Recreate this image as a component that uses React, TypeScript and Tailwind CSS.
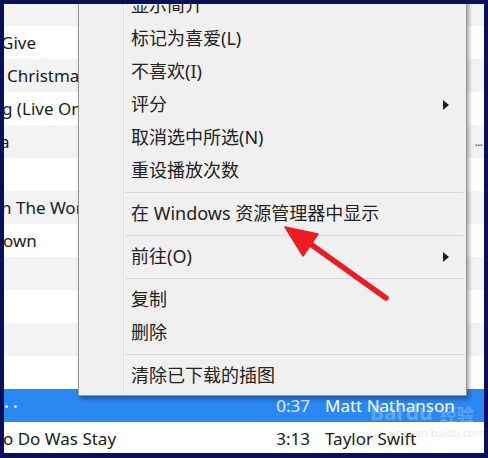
import React from "react";

type Row = { title?: string; shift?: number; time?: string; artist?: string; more?: boolean };

const rows: Row[] = [
  {},
  { title: "Give", shift: -3 },
  { title: "Christmas Song", shift: 3 },
  { title: "g (Live On Letterman)", shift: -2 },
  { title: "a", shift: -4, more: true },
  {},
  { title: "n The World", shift: -3 },
  { title: "own", shift: -1 },
  {},
  {},
  {},
  {},
  { time: "0:37", artist: "Matt Nathanson" },
  { title: "o Do Was Stay", shift: -1, time: "3:13", artist: "Taylor Swift" },
];

type Item = { label?: string; sub?: boolean; sep?: boolean };

const menu: Item[] = [
  { label: "显示简介" },
  { label: "标记为喜爱(L)" },
  { label: "不喜欢(I)" },
  { label: "评分", sub: true },
  { label: "取消选中所选(N)" },
  { label: "重设播放次数" },
  { sep: true },
  { label: "在 Windows 资源管理器中显示" },
  { sep: true },
  { label: "前往(O)", sub: true },
  { sep: true },
  { label: "复制" },
  { label: "删除" },
  { sep: true },
  { label: "清除已下载的插图" },
];

function ListRow({ row, index }: { row: Row; index: number }) {
  const selected = index === 12;
  const bg = selected ? "bg-[#2b87f2]" : index % 2 === 0 ? "bg-[#f3f3f3]" : "bg-white";
  const fg = selected ? "text-white" : "text-[#1b1b1b]";
  return (
    <div className={bg + " " + fg + " h-[33px] flex items-center text-[17px] relative"}>
      <div className="w-[272px] overflow-hidden whitespace-nowrap">
        {selected ? (
          <div className="flex gap-[6px] ml-[1px] mt-[2px]">
            <span className="w-[3px] h-[3px] rounded-full bg-[#dfe9fb]"></span>
            <span className="w-[3px] h-[3px] rounded-full bg-[#dfe9fb]"></span>
          </div>
        ) : (
          <span style={{ marginLeft: row.shift ?? 0 }}>{row.title}</span>
        )}
      </div>
      <div className={(selected ? "text-[#e4eefc] " : "") + "w-[34px] text-right"}>{row.time}</div>
      <div className="ml-[15px] flex-1 whitespace-nowrap">{row.artist}</div>
      {row.more && (
        <div className="absolute right-[2px] top-[10px] text-[13px] leading-none tracking-[-1px] text-[#3a5a9a]">...</div>
      )}
    </div>
  );
}

function Menu() {
  return (
    <div className="absolute left-[74px] bottom-[57px] w-[389px] bg-[#f0f0f0] border border-[#979797] shadow-[2px_3px_4px_rgba(0,0,0,0.35)] pb-[3px]">
      <div className="absolute left-[44px] top-0 bottom-0 w-[2px] border-l border-[#e0e0e0] bg-white"></div>
      {menu.map((it, i) =>
        it.sep ? (
          <div key={i} className="h-[10px] flex items-center pl-[46px] pr-[3px]">
            <div className="h-[1px] w-full bg-[#d7d7d7]"></div>
          </div>
        ) : (
          <div key={i} className="h-[33px] flex items-center pl-[52px] pr-[17px] relative text-[18px] text-[#222] whitespace-nowrap">
            <span className="flex-1">{it.label}</span>
            {it.sub && (
              <svg width="6" height="10" viewBox="0 0 6 10">
                <path d="M0 0 L6 5 L0 10 Z" fill="#202020" />
              </svg>
            )}
          </div>
        )
      )}
    </div>
  );
}

export default function App() {
  return (
    <div
      className="relative w-[488px] h-[458px] bg-[#0a0f5c] pt-[4px] pl-[4px] pr-[4px] pb-[5px]"
      style={{ fontFamily: '"Noto Sans", "Noto Sans CJK SC", sans-serif' }}
    >
      <div className="relative w-full h-full overflow-hidden bg-white">
        <div className="mt-[-11px]">
          {rows.map((r, i) => (
            <ListRow key={i} row={r} index={i} />
          ))}
        </div>
        <Menu />
        <div className="absolute left-[366px] top-[398px] text-white/25 leading-none pointer-events-none">
          <div className="flex items-end gap-[3px] text-[21px] font-bold">
            <span>Bai</span>
            <span className="text-[#c9dcf5]/40">du</span>
            <span className="text-[17px] ml-[4px]">经验</span>
          </div>
          <div className="text-[11px] text-[#9a9a9a]/25 ml-[20px] mt-[4px]">jingyan.baidu.com</div>
        </div>
      </div>
      <svg className="absolute left-0 top-0 pointer-events-none" width="488" height="458" viewBox="0 0 488 458">
        <line x1="309" y1="243" x2="386" y2="298" stroke="#ec1c24" strokeWidth="5.5" strokeLinecap="round" />
        <path d="M285 227 L318 234 L303 256 Z" fill="#ec1c24" stroke="#ec1c24" strokeWidth="1.5" strokeLinejoin="round" />
      </svg>
    </div>
  );
}
